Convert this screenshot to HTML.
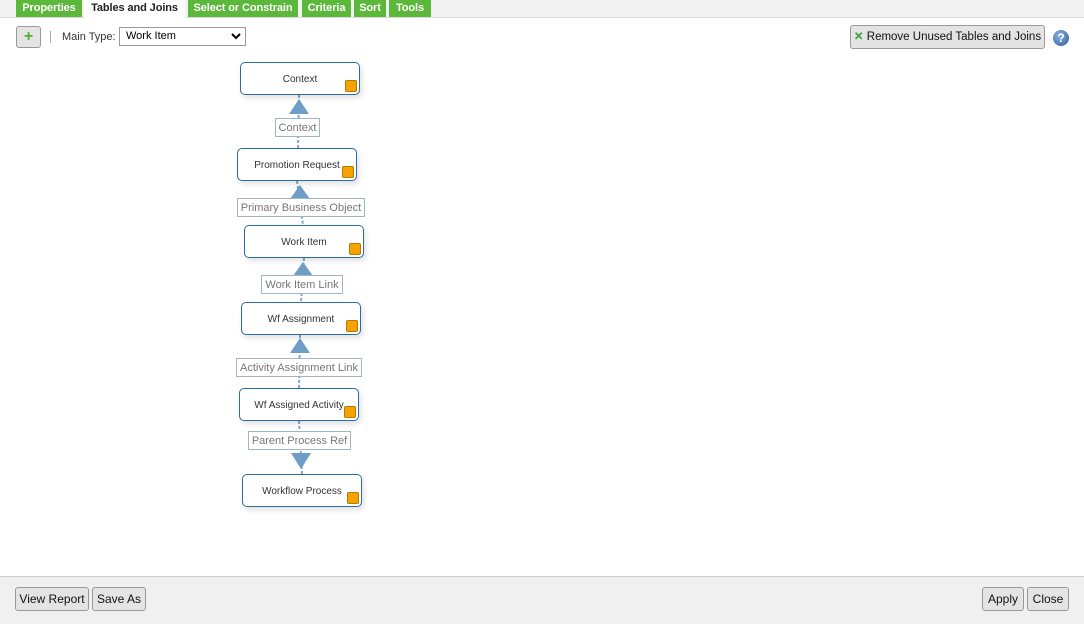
<!DOCTYPE html><html><head><style>
body{margin:0;width:1084px;height:623px;background:#fff;font-family:"Liberation Sans",sans-serif;position:relative;overflow:hidden}
.a{position:absolute}
.tabs{left:0;top:0;width:1084px;height:17px;background:#f3f3f3;border-bottom:1px solid #ddd}
.tab{position:absolute;top:0;height:17px;background:#5cb83a;color:#fff;font-weight:bold;font-size:11px;line-height:16px;text-align:center;white-space:nowrap;letter-spacing:-0.1px}
.tab.on{background:#fff;color:#222;height:18px}
.btn{position:absolute;background:#e4e4e4;border:1px solid #999;border-radius:3px;font-size:12px;color:#111;text-align:center;box-sizing:border-box;white-space:nowrap}
.node{position:absolute;width:120px;height:33px;box-sizing:border-box;border:1px solid #2e6b9e;border-radius:5px;background:#fff;font-size:10px;color:#333;text-align:center;line-height:33px;box-shadow:2px 3px 6px rgba(0,0,0,.12)}
.node i{position:absolute;right:2px;bottom:2px;width:10px;height:10px;background:#f5a300;border:1px solid #b87a00;border-radius:2px}
.lbl{position:absolute;height:19px;box-sizing:border-box;border:1px solid #9fb6c9;background:#fff;color:#777;font-size:11px;line-height:19px;text-align:center;white-space:nowrap}
</style></head><body>
<div class="a tabs"></div>
<div class="tab" style="left:16px;width:66px">Properties</div>
<div class="tab on" style="left:84px;width:101px">Tables and Joins</div>
<div class="tab" style="left:188px;width:110px">Select or Constrain</div>
<div class="tab" style="left:302px;width:49px">Criteria</div>
<div class="tab" style="left:354px;width:32px">Sort</div>
<div class="tab" style="left:389px;width:42px">Tools</div>
<div class="btn" style="left:16px;top:26px;width:25px;height:22px;color:#4caf32;font-weight:bold;font-size:16px;line-height:19px">+</div>
<div class="a" style="left:50px;top:31px;width:1px;height:12px;background:#aaa"></div>
<div class="a" style="left:62px;top:31px;font-size:11px;color:#333">Main Type:</div>
<div class="a" style="left:119px;top:27px;width:127px;height:19px;border:1px solid #999;box-sizing:border-box;font-size:11px;line-height:17px;padding-left:6px;color:#000">Work Item<svg style="position:absolute;right:4px;top:5px" width="10" height="7"><path d="M1 1 L5 5 L9 1" stroke="#000" stroke-width="2" fill="none"/></svg></div>
<div class="btn" style="left:850px;top:25px;width:195px;height:24px;line-height:23px;font-size:11.5px"><span style="color:#3a9a3a;font-weight:bold">✕</span> Remove Unused Tables and Joins</div>
<div class="a" style="left:1053px;top:30px;width:16px;height:16px;border-radius:50%;background:radial-gradient(circle at 40% 35%,#8ab4e0,#2a5b9a);color:#fff;font-weight:bold;font-size:12px;line-height:16px;text-align:center">?</div>
<svg class="a" style="left:0;top:0" width="1084" height="623">
<g stroke="#7fa7c6" stroke-width="2" stroke-dasharray="3,2" fill="none">
<line x1="299" y1="95" x2="298" y2="148"/><line x1="297" y1="181" x2="303" y2="225"/><line x1="304" y1="258" x2="301" y2="302"/><line x1="300" y1="335" x2="299" y2="388"/><line x1="299" y1="421" x2="302" y2="474"/></g>
<g fill="#6e9ec6"><path d="M299 99 L289 114 L309 114Z"/><path d="M300 185 L290 199 L310 199Z"/><path d="M303 262 L293 276 L313 276Z"/><path d="M300 338 L290 353 L310 353Z"/><path d="M301 469 L291 453 L311 453Z"/></g>
</svg>
<div class="lbl" style="left:275px;top:118px;width:45px">Context</div>
<div class="lbl" style="left:237px;top:198px;width:128px">Primary Business Object</div>
<div class="lbl" style="left:261px;top:275px;width:82px">Work Item Link</div>
<div class="lbl" style="left:236px;top:358px;width:126px">Activity Assignment Link</div>
<div class="lbl" style="left:248px;top:431px;width:103px">Parent Process Ref</div>
<div class="node" style="left:240px;top:62px">Context<i></i></div>
<div class="node" style="left:237px;top:148px">Promotion Request<i></i></div>
<div class="node" style="left:244px;top:225px">Work Item<i></i></div>
<div class="node" style="left:241px;top:302px">Wf Assignment<i></i></div>
<div class="node" style="left:239px;top:388px">Wf Assigned Activity<i></i></div>
<div class="node" style="left:242px;top:474px">Workflow Process<i></i></div>
<div class="a" style="left:0;top:576px;width:1084px;height:47px;background:#f0f0f0;border-top:1px solid #ccc"></div>
<div class="btn" style="left:15px;top:587px;width:74px;height:24px;line-height:23px">View Report</div>
<div class="btn" style="left:92px;top:587px;width:54px;height:24px;line-height:23px">Save As</div>
<div class="btn" style="left:982px;top:587px;width:42px;height:24px;line-height:23px">Apply</div>
<div class="btn" style="left:1027px;top:587px;width:42px;height:24px;line-height:23px">Close</div>
</body></html>
